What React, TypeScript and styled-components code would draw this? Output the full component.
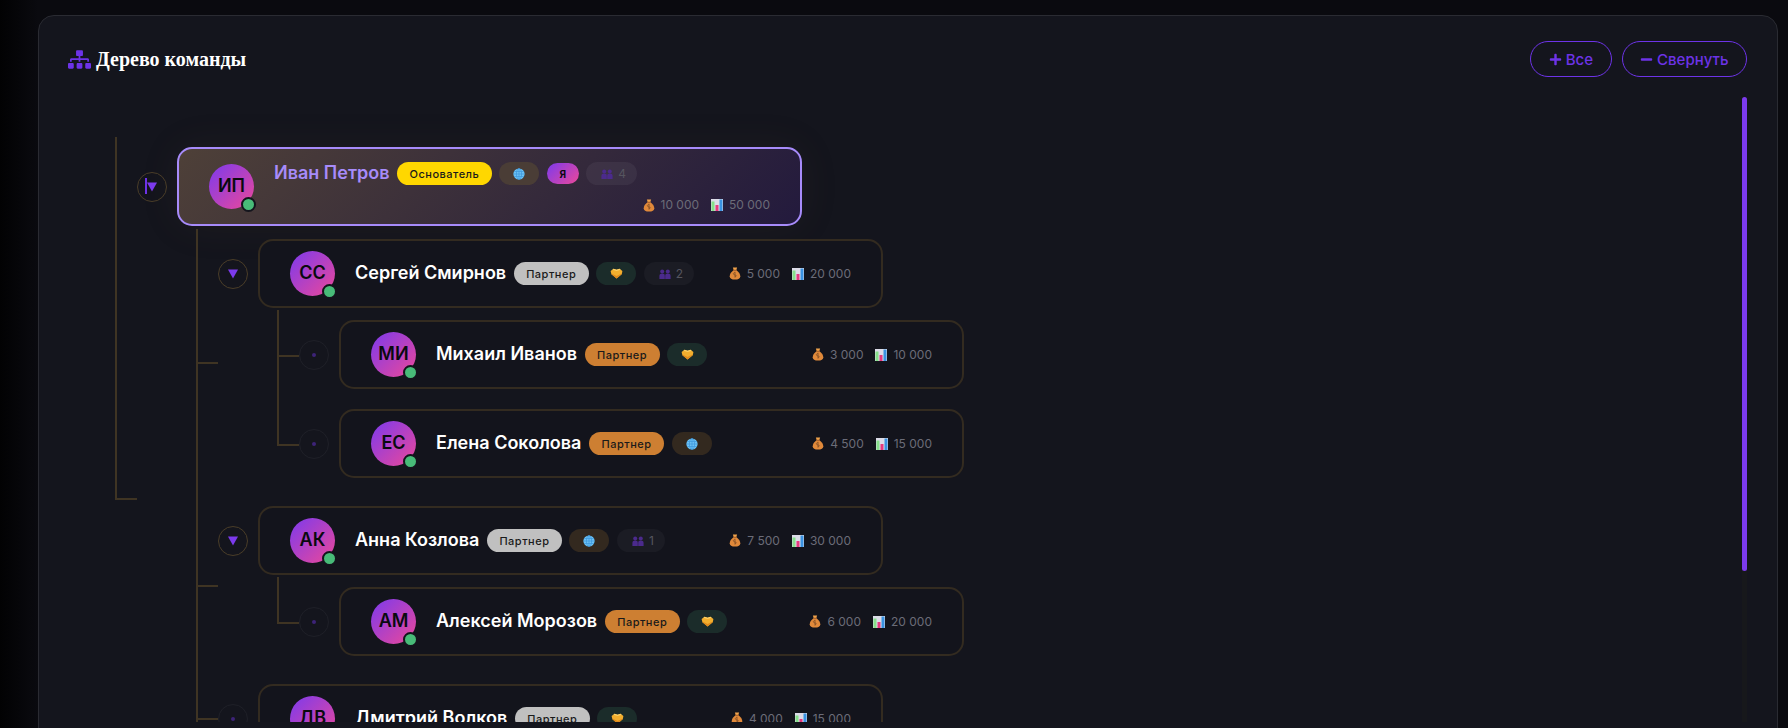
import React from "react";
import styled, { createGlobalStyle } from "styled-components";
import { FaSitemap, FaPlus, FaMinus } from "react-icons/fa";

const Global = createGlobalStyle`
  html, body { margin: 0; height: 100%; overflow: hidden; background: #0a0a0f; }
  #root { height: 100%; }
`;

const Page = styled.div`
  height: 728px;
  box-sizing: border-box;
  padding: 15px 10px 0 38px;
  background: linear-gradient(90deg, #020203 0, #0a0a0f 38px, #0a0a0f 100%);
  overflow: hidden;
`;

const Panel = styled.section`
  height: 730px;
  box-sizing: border-box;
  background: #14151d;
  border: 1px solid #2a2b32;
  border-radius: 16px;
  padding: 25px 30px 0 29px;
  font-family: Inter, "Noto Sans", sans-serif;
`;

const Header = styled.header`
  display: flex;
  align-items: center;
  justify-content: space-between;
  height: 36px;
  margin-bottom: 20px;
`;

const Title = styled.h3`
  display: flex;
  align-items: center;
  gap: 5px;
  margin: 0;
  font-family: "Liberation Serif", serif;
  font-size: 20px;
  font-weight: 700;
  color: #fff;
  svg { color: #6d33e8; font-size: 23px; }
`;

const Actions = styled.div`
  display: flex;
  gap: 10px;
`;

const ActionButton = styled.button`
  display: flex;
  align-items: center;
  gap: 4px;
  height: 36px;
  padding: 0 17.5px;
  box-sizing: border-box;
  background: transparent;
  border: 1px solid #6d33e8;
  border-radius: 18px;
  color: #6d33e8;
  font-family: Inter, sans-serif;
  font-size: 15px;
  font-weight: 500;
  svg { font-size: 13px; }
`;

const Scroller = styled.div`
  position: relative;
  height: 625px;
  overflow: hidden;
`;

const ScrollTrack = styled.div`
  position: absolute;
  top: 0;
  right: 0;
  width: 5px;
  height: 100%;
  background: #17181b;
`;

const ScrollThumb = styled.div`
  height: 474px;
  border-radius: 3px;
  background: #7c3aed;
`;

const RootList = styled.ul`
  list-style: none;
  margin: 0;
  padding: 40px 0 0 47px;
`;

const ChildList = styled.ul<{ $root?: boolean }>`
  list-style: none;
  margin: ${(p) => (p.$root ? "3px" : "2px")} 0 0 59px;
  padding: 0 0 8px;
`;

const Item = styled.li<{ $tick: number; $last?: boolean; $parent?: boolean }>`
  position: relative;
  padding: 10px 0 ${(p) => (p.$parent ? "0" : "10px")} 22px;
  &::before {
    content: "";
    position: absolute;
    left: 0;
    top: 0;
    width: 2px;
    height: ${(p) => (p.$last ? `${p.$tick}px` : "100%")};
    background: #3f3423;
  }
  &::after {
    content: "";
    position: absolute;
    left: 0;
    top: ${(p) => p.$tick}px;
    width: 22px;
    height: 2px;
    background: #3f3423;
  }
`;

const Row = styled.div`
  display: flex;
  align-items: center;
  gap: 10px;
`;

const Toggle = styled.div<{ $leaf?: boolean }>`
  position: relative;
  flex: none;
  width: 30px;
  height: 30px;
  box-sizing: border-box;
  border-radius: 50%;
  border: 1px solid ${(p) => (p.$leaf ? "#1f2028" : "#4a3d28")};
  display: flex;
  align-items: center;
  justify-content: center;
  color: #7c3aed;
`;

const Caret = styled.span`
  position: absolute;
  left: 7px;
  top: 5px;
  width: 2px;
  height: 16px;
  background: #6d33e8;
`;

const LeafDot = styled.span`
  width: 4px;
  height: 4px;
  border-radius: 50%;
  background: #3d2378;
`;

const Card = styled.div<{ $root?: boolean }>`
  width: 625px;
  box-sizing: border-box;
  display: flex;
  align-items: center;
  gap: 20px;
  padding: 10px 30px;
  border: 2px solid ${(p) => (p.$root ? "#a78bfa" : "#332b20")};
  border-radius: 15px;
  background: ${(p) =>
    p.$root
      ? "linear-gradient(135deg, #4e4038 0%, #231a3d 100%)"
      : "#13141c"};
  box-shadow: ${(p) => (p.$root ? "0 0 40px rgba(124, 90, 60, 0.09)" : "none")};
`;

const Avatar = styled.div`
  position: relative;
  flex: none;
  width: 45px;
  height: 45px;
  box-sizing: border-box;
  padding-bottom: 2px;
  border-radius: 50%;
  display: flex;
  align-items: center;
  justify-content: center;
  background: linear-gradient(135deg, #7c3aed, #ec4899);
  color: #0a0a0f;
  font-size: 18px;
  font-weight: 600;
`;

const StatusDot = styled.span`
  position: absolute;
  right: -2px;
  bottom: -3px;
  width: 15px;
  height: 15px;
  box-sizing: border-box;
  border-radius: 50%;
  background: #48bb78;
  border: 2px solid #14151d;
`;

const Info = styled.div<{ $stack?: boolean }>`
  flex: 1;
  min-width: 0;
  display: flex;
  flex-direction: ${(p) => (p.$stack ? "column" : "row")};
  align-items: ${(p) => (p.$stack ? "stretch" : "center")};
  justify-content: space-between;
  gap: ${(p) => (p.$stack ? "8px" : "0")};
  margin: ${(p) => (p.$stack ? "1px 0 -1px" : "0")};
`;

const NameRow = styled.div`
  display: flex;
  align-items: center;
  gap: 7.5px;
`;

const Name = styled.span<{ $root?: boolean }>`
  font-size: 18px;
  font-weight: 600;
  line-height: 25px;
  padding-bottom: 2px;
  color: ${(p) => (p.$root ? "#a78bfa" : "#fff")};
`;

const Rank = styled.span<{ $bg: string }>`
  height: 23px;
  box-sizing: border-box;
  display: inline-flex;
  align-items: center;
  padding: 0 12.5px;
  border-radius: 12px;
  background: ${(p) => p.$bg};
  color: #1a1a1a;
  font-size: 11px;
  font-weight: 500;
  letter-spacing: 0.5px;
`;

const TagPill = styled.span<{ $bg: string }>`
  width: 40px;
  height: 23px;
  display: inline-flex;
  align-items: center;
  justify-content: center;
  border-radius: 12px;
  background: ${(p) => p.$bg};
`;

const SelfPill = styled.span`
  height: 21px;
  width: 32px;
  display: inline-flex;
  align-items: center;
  justify-content: center;
  border-radius: 11px;
  background: linear-gradient(135deg, #7c3aed, #ec4899);
  color: #0a0a0f;
  font-size: 10px;
  font-weight: 700;
`;

const CountPill = styled.span<{ $root?: boolean }>`
  height: 23px;
  box-sizing: border-box;
  display: inline-flex;
  align-items: center;
  gap: 5px;
  padding: 0 11px 0 15px;
  border-radius: 12px;
  background: ${(p) => (p.$root ? "rgba(255,255,255,0.05)" : "#1b1c24")};
  color: #55555f;
  font-size: 12px;
`;

const Stats = styled.div`
  display: flex;
  justify-content: flex-end;
  line-height: 20px;
  gap: 12px;
`;

const Stat = styled.span`
  display: inline-flex;
  align-items: center;
  gap: 6px;
  color: #6b6c78;
  font-size: 12px;
`;

const GlobeIcon = () => (
  <svg width="12" height="12" viewBox="0 0 12 12">
    <circle cx="6" cy="6" r="5.6" fill="#6cc2f4" />
    <g fill="none" stroke="#3c97dc" strokeWidth="0.7">
      <ellipse cx="6" cy="6" rx="2.6" ry="5.5" />
      <path d="M6 .5v11M1.1 3.5h9.8M.5 6h11M1.1 8.5h9.8" />
    </g>
  </svg>
);

const DealIcon = () => (
  <svg width="13" height="11" viewBox="0 0 13 11">
    <path d="M.6 3 3.6.8l3 1 2.8-1 3 2.2-.6 3.2L6.6 10.6 1.4 6.2z" fill="#f2ae2e" />
    <path d="M1.2 5.4 6.6 8l5.2-2.6-.3.8-4.9 4.4-5.2-4.4z" fill="#e0891c" />
    <path d="M3.6.8l3 1 2.8-1 1.4 1-4.2 1.2-4.2-1.2z" fill="#fbd066" />
  </svg>
);

const BagIcon = () => (
  <svg width="12" height="13" viewBox="0 0 11 13">
    <path d="M3.4.6h4.2L6.8 3.2H4.2z" fill="#efa24a" />
    <path d="M4 3.2h3C9.4 5 10.8 7 10.8 9.2c0 2.4-2 3.4-5.3 3.4S.2 11.6.2 9.2C.2 7 1.6 5 4 3.2z" fill="#e0893a" />
    <rect x="3.9" y="2.7" width="3.2" height="1" fill="#a9602a" />
    <path d="M5.5 5.6c-1 0-1.6.5-1.6 1.2 0 1.5 3 1 3 2 0 .4-.5.7-1.4.7M5.5 4.8v5.8" fill="none" stroke="#8a5226" strokeWidth="0.9" />
  </svg>
);

const ChartIcon = () => (
  <svg width="12" height="12" viewBox="0 0 12 12">
    <rect width="12" height="12" fill="#dcdce8" />
    <rect x="0.5" y="2.5" width="3" height="9.5" fill="#86e08a" />
    <rect x="4.5" y="6" width="3" height="6" fill="#e6397f" />
    <rect x="8.5" y="0.5" width="3" height="11.5" fill="#3a93e2" />
  </svg>
);

const PeopleIcon = () => (
  <svg width="12" height="10" viewBox="0 0 12 10">
    <g fill="#4b2a8c">
      <circle cx="3.2" cy="2.4" r="2" />
      <circle cx="8.8" cy="2.4" r="2" />
      <path d="M.4 10V7c0-1.6 1.2-2.4 2.8-2.4S5.8 5.4 5.8 7v3z" />
      <path d="M6.2 10V7c0-1.6 1-2.4 2.6-2.4S11.6 5.4 11.6 7v3z" />
    </g>
  </svg>
);

const Triangle = () => (
  <svg width="10" height="10" viewBox="0 0 10 10">
    <path d="M0 .5h10L5 9.5z" fill="currentColor" />
  </svg>
);

type NodeData = {
  name: string;
  initials: string;
  rank: string;
  rankBg: string;
  tag: "net" | "deal";
  count?: number;
  own: string;
  team: string;
  tick: number;
  last?: boolean;
  children?: NodeData[];
};

const SILVER = "#c0c0c0";
const BRONZE = "#cd7f32";

const tree: NodeData[] = [
  {
    name: "Сергей Смирнов", initials: "СС", rank: "Партнер", rankBg: SILVER, tag: "deal", count: 2,
    own: "5 000", team: "20 000", tick: 133,
    children: [
      { name: "Михаил Иванов", initials: "МИ", rank: "Партнер", rankBg: BRONZE, tag: "deal", own: "3 000", team: "10 000", tick: 45 },
      { name: "Елена Соколова", initials: "ЕС", rank: "Партнер", rankBg: BRONZE, tag: "net", own: "4 500", team: "15 000", tick: 45, last: true },
    ],
  },
  {
    name: "Анна Козлова", initials: "АК", rank: "Партнер", rankBg: SILVER, tag: "net", count: 1,
    own: "7 500", team: "30 000", tick: 89,
    children: [
      { name: "Алексей Морозов", initials: "АМ", rank: "Партнер", rankBg: BRONZE, tag: "deal", own: "6 000", team: "20 000", tick: 45, last: true },
    ],
  },
  { name: "Дмитрий Волков", initials: "ДВ", rank: "Партнер", rankBg: SILVER, tag: "deal", own: "4 000", team: "15 000", tick: 44 },
];

const tagBg = { net: "#33291f", deal: "#1b2c2a" };

const Node = ({ n }: { n: NodeData }) => (
  <Item $tick={n.tick} $last={n.last} $parent={!!n.children}>
    <Row>
      <Toggle $leaf={!n.children}>
        {n.children ? <Triangle /> : <LeafDot />}
      </Toggle>
      <Card>
        <Avatar>
          {n.initials}
          <StatusDot />
        </Avatar>
        <Info>
          <NameRow>
            <Name>{n.name}</Name>
            <Rank $bg={n.rankBg}>{n.rank}</Rank>
            <TagPill $bg={tagBg[n.tag]}>{n.tag === "net" ? <GlobeIcon /> : <DealIcon />}</TagPill>
            {n.count !== undefined && <CountPill><PeopleIcon /> {n.count}</CountPill>}
          </NameRow>
          <Stats>
            <Stat><BagIcon /> {n.own}</Stat>
            <Stat><ChartIcon /> {n.team}</Stat>
          </Stats>
        </Info>
      </Card>
    </Row>
    {n.children && (
      <ChildList>
        {n.children.map((c) => (
          <Node key={c.name} n={c} />
        ))}
      </ChildList>
    )}
  </Item>
);

export default function App() {
  return (
    <Page>
      <Global />
      <Panel>
        <Header>
          <Title>
            <FaSitemap /> Дерево команды
          </Title>
          <Actions>
            <ActionButton><FaPlus /> Все</ActionButton>
            <ActionButton><FaMinus /> Свернуть</ActionButton>
          </Actions>
        </Header>
        <Scroller>
          <RootList>
            <Item $tick={361} $last $parent>
              <Row>
                <Toggle>
                  <Caret />
                  <Triangle />
                </Toggle>
                <Card $root>
                  <Avatar>
                    ИП
                    <StatusDot />
                  </Avatar>
                  <Info $stack>
                    <NameRow>
                      <Name $root>Иван Петров</Name>
                      <Rank $bg="#ffd700">Основатель</Rank>
                      <TagPill $bg="#4a3d36"><GlobeIcon /></TagPill>
                      <SelfPill>Я</SelfPill>
                      <CountPill $root><PeopleIcon /> 4</CountPill>
                    </NameRow>
                    <Stats>
                      <Stat><BagIcon /> 10 000</Stat>
                      <Stat><ChartIcon /> 50 000</Stat>
                    </Stats>
                  </Info>
                </Card>
              </Row>
              <ChildList $root>
                {tree.map((n) => (
                  <Node key={n.name} n={n} />
                ))}
              </ChildList>
            </Item>
          </RootList>
          <ScrollTrack>
            <ScrollThumb />
          </ScrollTrack>
        </Scroller>
      </Panel>
    </Page>
  );
}
